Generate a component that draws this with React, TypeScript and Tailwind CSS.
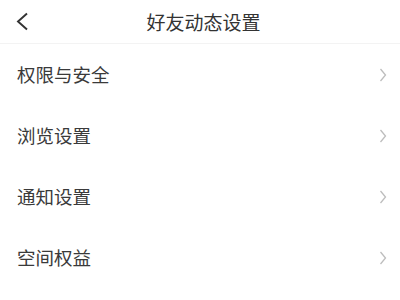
const items = ["权限与安全", "浏览设置", "通知设置", "空间权益"];

export default function App() {
  return (
    <div
      className="h-[300px] w-[400px] overflow-hidden bg-white text-[#333]"
      style={{ fontFamily: '"Noto Sans CJK SC", "Noto Sans", sans-serif' }}
    >
      <div className="relative flex h-[44px] items-center justify-center border-b border-[#f3f3f3]">
        <svg
          className="absolute left-[15px] top-[12px]"
          width="14"
          height="19"
          viewBox="0 0 14 19"
          fill="none"
        >
          <path d="M12 1.5 L3 9.5 L12 17.5" stroke="#333" strokeWidth="1.9" />
        </svg>
        <span className="ml-[7px] text-[19px] leading-none text-[#333]">好友动态设置</span>
      </div>
      {items.map((label) => (
        <div key={label} className="flex h-[61px] items-center justify-between pl-[17px] pr-[13px]">
          <span className="text-[18.5px] leading-none text-[#3a3a3a]">{label}</span>
          <svg width="8" height="14" viewBox="0 0 8 14" fill="none">
            <path d="M1.5 1 L6.5 7 L1.5 13" stroke="#bdbdbd" strokeWidth="1.3" />
          </svg>
        </div>
      ))}
    </div>
  );
}
